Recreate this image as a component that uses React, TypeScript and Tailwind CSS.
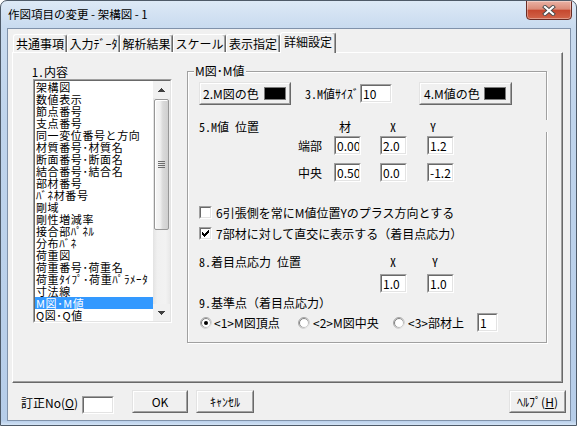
import React from "react";

const UI = "font-['Noto_Sans_CJK_JP','Noto_Sans_CJK_SC',sans-serif]";
const GOTHIC = "font-['Noto_Sans_Mono_CJK_JP','Noto_Sans_CJK_JP',monospace]";

const items = [
  "架構図",
  "数値表示",
  "節点番号",
  "支点番号",
  "同一変位番号と方向",
  "材質番号･材質名",
  "断面番号･断面名",
  "結合番号･結合名",
  "部材番号",
  "ﾊﾞﾈ材番号",
  "剛域",
  "剛性増減率",
  "接合部ﾊﾟﾈﾙ",
  "分布ﾊﾞﾈ",
  "荷重図",
  "荷重番号･荷重名",
  "荷重ﾀｲﾌﾟ･荷重ﾊﾟﾗﾒｰﾀ",
  "寸法線",
  "M図･M値",
  "Q図･Q値",
];

function Edit({ cls, value }: { cls: string; value: string }) {
  return (
    <div className={`${cls} shrink-0 border border-[#a0a0a0] border-r-white border-b-white`}>
      <div className="w-full h-full bg-white border border-[#696969] border-r-[#e3e3e3] border-b-[#e3e3e3] pl-[1px] text-[12px] leading-[15px] whitespace-nowrap overflow-hidden">
        {value}
      </div>
    </div>
  );
}

function Btn({ cls, inner, children }: { cls: string; inner: string; children: React.ReactNode }) {
  return (
    <div className={`${cls} shrink-0 border border-[#e3e3e3] border-r-[#696969] border-b-[#696969] bg-[#f0f0f0]`}>
      <div className={`w-full h-full border border-white border-r-[#a0a0a0] border-b-[#a0a0a0] flex items-center leading-[12px] whitespace-nowrap ${inner}`}>
        {children}
      </div>
    </div>
  );
}

function Check({ checked }: { checked?: boolean }) {
  return (
    <div className="w-[13px] h-[13px] shrink-0 border border-[#a0a0a0] border-r-white border-b-white">
      <div className="w-full h-full bg-white border border-[#696969] border-r-[#e3e3e3] border-b-[#e3e3e3] flex items-center justify-center">
        {checked && (
          <svg width="7" height="7" viewBox="0 0 7 7" shapeRendering="crispEdges">
            <path
              d="M6 0h1v1h-1z M5 1h2v1h-2z M0 2h1v1h-1z M4 2h3v1h-3z M0 3h2v1h-2z M3 3h3v1h-3z M0 4h5v1h-5z M1 5h3v1h-3z M2 6h1v1h-1z"
              fill="#000"
            />
          </svg>
        )}
      </div>
    </div>
  );
}

function Radio({ checked }: { checked?: boolean }) {
  return (
    <svg width="12" height="12" viewBox="0 0 12 12" className="shrink-0">
      <defs>
        <linearGradient id="rgo" x1="0" y1="0" x2="1" y2="1">
          <stop offset="0" stopColor="#9a9a9a" />
          <stop offset="0.5" stopColor="#b0b0b0" />
          <stop offset="1" stopColor="#ffffff" />
        </linearGradient>
        <linearGradient id="rgi" x1="0" y1="0" x2="1" y2="1">
          <stop offset="0" stopColor="#696969" />
          <stop offset="0.5" stopColor="#9a9a9a" />
          <stop offset="1" stopColor="#e3e3e3" />
        </linearGradient>
      </defs>
      <circle cx="6" cy="6" r="5.5" fill="none" stroke="url(#rgo)" strokeWidth="1" />
      <circle cx="6" cy="6" r="4.5" fill="#ffffff" stroke="url(#rgi)" strokeWidth="1" />
      {checked && <circle cx="6" cy="6" r="2" fill="#000" />}
    </svg>
  );
}

function ListBox() {
  return (
    <div className="mt-[1px] ml-[20px] w-[139px] h-[244px] border border-[#a0a0a0] border-r-white border-b-white">
      <div className="w-full h-full bg-white border border-[#696969] border-r-[#e3e3e3] border-b-[#e3e3e3] flex">
        <div className="flex-1 flex flex-col">
          {items.map((t) => (
            <div
              key={t}
              className={`h-[12px] leading-[12px] pl-[1px] whitespace-nowrap text-[11px] tracking-[0.6px] ${
                t === "M図･M値" ? "bg-[#3399ff] text-white" : "text-black"
              }`}
            >
              {t}
            </div>
          ))}
        </div>
        <div className="w-[17px] flex flex-col bg-[linear-gradient(to_right,#e3e3e3,#f0f0f0_25%,#f2f2f2_75%,#e8e8e8)]">
          <div className="h-[17px] flex items-center justify-center bg-[#f0f0f0]">
            <svg width="7" height="4" viewBox="0 0 7 4" shapeRendering="crispEdges">
              <path d="M3 0h1v1h-1z M2 1h3v1h-3z M1 2h5v1h-5z M0 3h7v1h-7z" fill="#404040" />
            </svg>
          </div>
          <div className="flex-1 flex flex-col">
            <div className="mt-[1px] mx-[1px] h-[131px] rounded-[2px] border border-[#979797] bg-[linear-gradient(to_right,#f7f7f7,#efefef_40%,#dadada_60%,#cfcfcf)] shadow-[inset_1px_1px_0_#ffffff] flex items-center justify-center">
              <div className="flex flex-col gap-[1px]">
                <div className="w-[7px] h-[1px] bg-[#6e6e6e]" />
                <div className="w-[7px] h-[1px] bg-[#6e6e6e]" />
                <div className="w-[7px] h-[1px] bg-[#6e6e6e]" />
                <div className="w-[7px] h-[1px] bg-[#6e6e6e]" />
              </div>
            </div>
          </div>
          <div className="h-[17px] flex items-center justify-center bg-[#f0f0f0]">
            <svg width="7" height="4" viewBox="0 0 7 4" shapeRendering="crispEdges">
              <path d="M0 0h7v1h-7z M1 1h5v1h-5z M2 2h3v1h-3z M3 3h1v1h-1z" fill="#404040" />
            </svg>
          </div>
        </div>
      </div>
    </div>
  );
}

function Tab({ cls, children }: { cls: string; children: React.ReactNode }) {
  return (
    <div
      className={`${cls} shrink-0 rounded-t-[3px] border-t border-l border-white border-r border-r-[#696969] shadow-[inset_-1px_0_0_#a0a0a0] flex items-center justify-center leading-[12px] whitespace-nowrap text-[12px]`}
    >
      {children}
    </div>
  );
}

export default function App() {
  return (
    <div
      className={`${UI} w-[577px] h-[426px] relative flex flex-col overflow-hidden rounded-t-[7px] border border-[#4e5a68] bg-[linear-gradient(to_bottom,#dde9f6_0px,#c9dbef_26px,#bfd4ec_120px,#b6cde9_100%)] text-[12px] text-black`}
    >
      {/* title bar */}
      <div className="h-[27px] shrink-0 flex items-center pl-[7px] pb-[1px]">
        <span className="leading-[12px] text-[11.5px] whitespace-nowrap">作図項目の変更 - 架構図 - 1</span>
      </div>

      {/* close button */}
      <div className="absolute top-[-1px] right-[4px] w-[46px] h-[20px] rounded-b-[4px] border border-[#6a2c25] bg-[linear-gradient(to_bottom,#eab2a5_0%,#db8b78_45%,#c6482f_52%,#d2654a_100%)] shadow-[inset_0_0_0_1px_rgba(255,255,255,0.35)] flex items-center justify-center">
        <svg width="14" height="11" viewBox="0 0 14 11">
          <path d="M3 2 L11 9 M11 2 L3 9" stroke="#4a4a4a" strokeWidth="4" strokeLinecap="square" />
          <path d="M3 2 L11 9 M11 2 L3 9" stroke="#ffffff" strokeWidth="2.2" strokeLinecap="square" />
        </svg>
      </div>

      {/* client area */}
      <div className="ml-[6px] mr-[5px] h-[393px] shrink-0 border border-[#8092aa] bg-[#f0f0f0] flex flex-col">
        {/* tabs */}
        <div className="h-[23px] shrink-0 flex items-end pl-[5px]">
          <Tab cls="w-[54px] h-[18px]">共通事項</Tab>
          <Tab cls="w-[53px] h-[18px]">入力ﾃﾞｰﾀ</Tab>
          <Tab cls="w-[53px] h-[18px]">解析結果</Tab>
          <Tab cls="w-[53px] h-[18px]">スケール</Tab>
          <Tab cls="w-[54px] h-[18px]">表示指定</Tab>
          <Tab cls="w-[56px] h-[21px] mb-[-1px] relative z-10 bg-[#f0f0f0] pb-[2px]">詳細設定</Tab>
        </div>

        {/* tab panel */}
        <div className="ml-[4px] mr-[7px] h-[331px] shrink-0 border-t border-l border-white border-r border-b border-r-[#696969] border-b-[#696969] shadow-[inset_-1px_-1px_0_#a0a0a0] flex">
          {/* left column */}
          <div className="w-[174px] shrink-0 flex flex-col">
            <div className={`${GOTHIC} mt-[13px] ml-[19px] h-[12px] leading-[12px]`}>1.内容</div>
            <ListBox />
          </div>

          {/* group box */}
          <div className="mt-[18px] w-[360px] h-[272px] shrink-0 relative border border-[#a0a0a0] shadow-[inset_1px_1px_0_#ffffff,1px_1px_0_#ffffff]">
            <div className="absolute left-[6px] top-[-7px] px-[1px] bg-[#f0f0f0] leading-[12px] whitespace-nowrap">M図･M値</div>
            <div className="absolute right-[-2px] top-[48px] w-[3px] h-[12px] bg-[#f0f0f0]" />

            <div className="pl-[11px] pt-[10px] flex flex-col">
              {/* row 1 */}
              <div className="flex items-start h-[23px]">
                <Btn cls="w-[92px] h-[23px]" inner="pl-[2px]">
                  <span>2.M図の色</span>
                  <span className="ml-auto mr-[3px] w-[22px] h-[13px] bg-black border border-[#7a7a7a]" />
                </Btn>
                <div className={`${GOTHIC} ml-[14px] mt-[6px] w-[55px] leading-[12px] whitespace-nowrap`}>3.M値ｻｲｽﾞ</div>
                <Edit cls="w-[32px] h-[19px] mt-[2px]" value="10" />
                <Btn cls="ml-[27px] w-[93px] h-[23px]" inner="pl-[3px]">
                  <span>4.M値の色</span>
                  <span className="ml-auto mr-[4px] w-[22px] h-[13px] bg-black border border-[#7a7a7a]" />
                </Btn>
              </div>

              {/* row 5 header */}
              <div className={`${GOTHIC} mt-[16px] flex h-[12px] leading-[12px] whitespace-nowrap`}>
                <span className="w-[140px] shrink-0">5.M値 位置</span>
                <span className="w-[12px] shrink-0">材</span>
                <span className="ml-[35px] w-[14px] shrink-0 text-center">X</span>
                <span className="ml-[26px] w-[14px] shrink-0 text-center">Y</span>
              </div>

              {/* 端部 */}
              <div className="mt-[3px] flex items-center h-[19px]">
                <span className={`${GOTHIC} ml-[99px] w-[36px] shrink-0 leading-[12px]`}>端部</span>
                <Edit cls="w-[27px] h-[19px]" value="0.00" />
                <Edit cls="ml-[19px] w-[27px] h-[19px]" value="2.0" />
                <Edit cls="ml-[20px] w-[27px] h-[19px]" value="1.2" />
              </div>

              {/* 中央 */}
              <div className="mt-[8px] flex items-center h-[19px]">
                <span className={`${GOTHIC} ml-[99px] w-[36px] shrink-0 leading-[12px]`}>中央</span>
                <Edit cls="w-[27px] h-[19px]" value="0.50" />
                <Edit cls="ml-[19px] w-[27px] h-[19px]" value="0.0" />
                <Edit cls="ml-[20px] w-[27px] h-[19px]" value="-1.2" />
              </div>

              {/* checkbox 6 */}
              <div className="mt-[24px] flex items-center h-[13px]">
                <Check />
                <span className="ml-[4px] leading-[12px] whitespace-nowrap">6引張側を常にM値位置Yのプラス方向とする</span>
              </div>

              {/* checkbox 7 */}
              <div className="mt-[8px] flex items-center h-[13px]">
                <Check checked />
                <span className="ml-[4px] leading-[12px] whitespace-nowrap">7部材に対して直交に表示する（着目点応力）</span>
              </div>

              {/* row 8 */}
              <div className={`${GOTHIC} mt-[16px] flex h-[12px] leading-[12px] whitespace-nowrap`}>
                <span className="w-[187px] shrink-0">8.着目点応力 位置</span>
                <span className="w-[14px] shrink-0 text-center">X</span>
                <span className="ml-[28px] w-[14px] shrink-0 text-center">Y</span>
              </div>
              <div className="mt-[6px] flex h-[19px]">
                <Edit cls="ml-[181px] w-[27px] h-[19px]" value="1.0" />
                <Edit cls="ml-[20px] w-[27px] h-[19px]" value="1.0" />
              </div>

              {/* row 9 */}
              <div className={`${GOTHIC} mt-[4px] h-[12px] leading-[12px] whitespace-nowrap`}>9.基準点（着目点応力）</div>
              <div className="mt-[4px] flex items-center h-[19px]">
                <div className="w-[99px] shrink-0 pl-[1px] flex items-center">
                  <Radio checked />
                  <span className="ml-[2px] leading-[12px] whitespace-nowrap">&lt;1&gt;M図頂点</span>
                </div>
                <div className="w-[95px] shrink-0 flex items-center">
                  <Radio />
                  <span className="ml-[3px] leading-[12px] whitespace-nowrap">&lt;2&gt;M図中央</span>
                </div>
                <div className="w-[84px] shrink-0 flex items-center">
                  <Radio />
                  <span className="ml-[3px] leading-[12px] whitespace-nowrap">&lt;3&gt;部材上</span>
                </div>
                <Edit cls="w-[21px] h-[19px]" value="1" />
              </div>
            </div>
          </div>
        </div>

        {/* bottom row */}
        <div className="mt-[7px] flex items-start">
          <span className="ml-[13px] mt-[7px] w-[61px] shrink-0 leading-[12px] whitespace-nowrap">
            訂正No(<span className="underline">O</span>)
          </span>
          <Edit cls="mt-[6px] w-[32px] h-[18px]" value="" />
          <Btn cls="ml-[18px] w-[56px] h-[23px]" inner="justify-center">
            OK
          </Btn>
          <Btn cls="ml-[8px] w-[58px] h-[23px]" inner="justify-center">
            ｷｬﾝｾﾙ
          </Btn>
          <Btn cls="ml-auto mr-[4px] w-[57px] h-[23px]" inner="justify-center">
            <span>
              ﾍﾙﾌﾟ(<span className="underline">H</span>)
            </span>
          </Btn>
        </div>
      </div>

      {/* bottom frame */}
      <div className="flex-1 bg-[linear-gradient(to_bottom,#b9cfea,#d3e3f5)]" />
    </div>
  );
}
